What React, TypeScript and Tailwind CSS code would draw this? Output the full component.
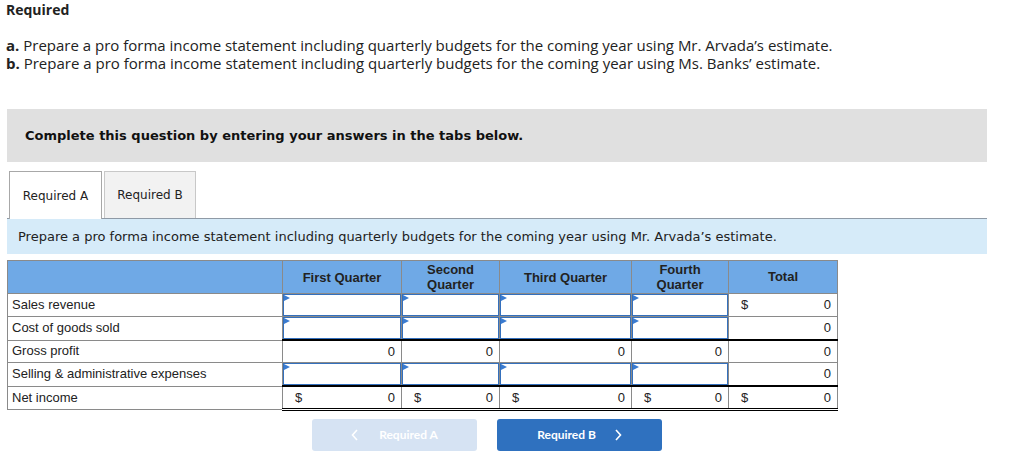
import React from "react";

const verdana = { fontFamily: '"DejaVu Sans", Verdana, sans-serif' };

const cols = [
  { key: "q1", label: "First Quarter", w: "w-[119px]" },
  { key: "q2", label: "Second Quarter", w: "w-[98px]" },
  { key: "q3", label: "Third Quarter", w: "w-[132px]" },
  { key: "q4", label: "Fourth Quarter", w: "w-[97px]" },
];

type Row = {
  label: string;
  input: boolean;
  dollar?: boolean;
  topBlack?: boolean;
  last?: boolean;
  totalDollar?: boolean;
};

const rows: Row[] = [
  { label: "Sales revenue", input: true, totalDollar: true },
  { label: "Cost of goods sold", input: true },
  { label: "Gross profit", input: false, topBlack: true },
  { label: "Selling & administrative expenses", input: true },
  { label: "Net income", input: false, dollar: true, topBlack: true, last: true, totalDollar: true },
];

function InputCell() {
  return (
    <div className="relative h-[22px] border-[1.5px] border-[#3470bd] bg-white">
      <span className="absolute left-0 top-0 h-0 w-0 border-y-[3px] border-l-[6px] border-y-transparent border-l-[#3a7bd0]" />
    </div>
  );
}

function ValueCell({ dollar, short }: { dollar?: boolean; short?: boolean }) {
  return (
    <div className={`flex ${short ? "h-[21px]" : "h-[22px]"} items-center justify-between px-[6px]`}>
      <span className="pl-[6px]">{dollar ? "$" : ""}</span>
      <span>0</span>
    </div>
  );
}

export default function App() {
  return (
    <div className="min-h-[466px] w-[1027px] bg-white pl-[6px] pt-[1px] text-[#222]">
      <div style={{ fontFamily: '"Open Sans", sans-serif' }}>
        <h2 className="text-[14px] font-bold leading-[18px] text-[#222]">Required</h2>
        <div className="mt-[17px] text-[15px] leading-[18px] text-[#222]">
          <p>
            <b>a.</b> Prepare a pro forma income statement including quarterly budgets for the coming year using Mr. Arvada’s estimate.
          </p>
          <p>
            <b>b.</b> Prepare a pro forma income statement including quarterly budgets for the coming year using Ms. Banks’ estimate.
          </p>
        </div>
      </div>

      <div className="ml-[1px] mt-[37px] w-[980px]" style={verdana}>
        <div className="flex h-[53px] items-center bg-[#e0e0e0] pl-[18px] text-[13px] font-bold text-[#111]">
          Complete this question by entering your answers in the tabs below.
        </div>

        <div className="mt-[8px] flex h-[48px] items-end pl-[2px] text-[12px] text-[#222]">
          <div className="relative z-10 -mb-[1px] flex h-[48px] w-[93px] items-center justify-center border border-b-0 border-[#a8a8a8] bg-white">
            Required A
          </div>
          <div className="ml-[2px] flex h-[47px] w-[92px] items-center justify-center border border-b-0 border-[#c8c8c8] bg-[#f2f2f2]">
            Required B
          </div>
          <div className="h-0 flex-1" />
        </div>
        <div className="flex h-[36px] items-center border-t border-[#8f9aa6] bg-[#d6ebf9] pl-[11px] text-[13px] text-[#222]">
          Prepare a pro forma income statement including quarterly budgets for the coming year using Mr. Arvada’s estimate.
        </div>
      </div>

      <table
        className="ml-[1px] mt-[6px] border-collapse text-[13px] text-[#222]"
        style={{ fontFamily: '"Liberation Sans", Arial, sans-serif' }}
      >
        <thead>
          <tr className="h-[33px] bg-[#6fa9e6]">
            <th className="w-[275px] border border-[#8a8a8a] p-0" />
            {cols.map((c) => (
              <th key={c.key} className={`${c.w} border border-[#8a8a8a] px-1 py-0 text-center font-bold leading-[15px]`}>
                {c.key === "q2" ? (
                  <>
                    Second
                    <br />
                    Quarter
                  </>
                ) : c.key === "q4" ? (
                  <>
                    Fourth
                    <br />
                    Quarter
                  </>
                ) : (
                  c.label
                )}
              </th>
            ))}
            <th className="w-[109px] border border-[#8a8a8a] p-0 text-center font-bold">Total</th>
          </tr>
        </thead>
        <tbody>
          {rows.map((r) => (
            <tr key={r.label}>
              <td className="border border-[#8a8a8a] px-[4px] py-0 leading-[20px]">{r.label}</td>
              {cols.map((c) => (
                <td
                  key={c.key}
                  className={`border border-[#8a8a8a] p-0 ${r.topBlack ? "border-t-2 border-t-black" : ""} ${
                    r.last ? "border-b-[3px] border-b-black border-double" : ""
                  }`}
                >
                  {r.input ? <InputCell /> : <ValueCell dollar={r.dollar} short={r.topBlack} />}
                </td>
              ))}
              <td
                className={`border border-[#8a8a8a] p-0 ${r.topBlack ? "border-t-2 border-t-black" : ""} ${
                  r.last ? "border-b-[3px] border-b-black border-double" : ""
                }`}
              >
                <ValueCell dollar={r.totalDollar} short={r.topBlack} />
              </td>
            </tr>
          ))}
        </tbody>
      </table>

      <div className="ml-[306px] mt-[8px] flex gap-[20px]" style={{ fontFamily: "Lato, sans-serif" }}>
        <button className="flex h-[32px] w-[165px] items-center justify-center gap-[20px] rounded-[3px] bg-[#d6e3f3] text-[12px] font-bold text-white">
          <svg width="8" height="12" viewBox="0 0 8 12" fill="none" stroke="white" strokeWidth="1.6">
            <path d="M6 1 L1.5 6 L6 11" />
          </svg>
          Required A
        </button>
        <button className="flex h-[32px] w-[165px] items-center justify-center gap-[18px] rounded-[3px] bg-[#2f71bf] text-[12px] font-bold text-white">
          Required B
          <svg width="8" height="12" viewBox="0 0 8 12" fill="none" stroke="white" strokeWidth="1.6">
            <path d="M2 1 L6.5 6 L2 11" />
          </svg>
        </button>
      </div>
    </div>
  );
}
